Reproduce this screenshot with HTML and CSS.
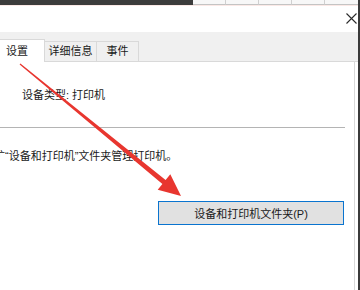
FILE: index.html
```html
<!DOCTYPE html>
<html lang="zh-CN">
<head>
    <meta charset="UTF-8">
    <meta name="viewport" content="width=device-width, initial-scale=1.0">
    <title>打印机属性</title>
    <link rel="stylesheet" href="styles.css">
</head>
<body>
    <div class="window">
        <div class="topbar">
            <div class="topbar-dark"></div>
            <div class="topbar-cell"></div>
            <div class="topbar-cell"></div>
            <div class="topbar-cell"></div>
            <div class="topbar-cell"></div>
            <div class="topbar-cell"></div>
        </div>

        <div class="titlebar">
            <svg class="close" width="11" height="11" viewBox="0 0 11 11">
                <path d="M0.5 0.5 L10.5 10.5 M10.5 0.5 L0.5 10.5" stroke="#2b2b2b" stroke-width="1.1" fill="none"/>
            </svg>
        </div>

        <div class="tabstrip">
            <div class="tab active">设置</div>
            <div class="tab">详细信息</div>
            <div class="tab">事件</div>
        </div>

        <div class="panel">
            <p class="device-type">设备类型: 打印机</p>
            <hr class="separator">
            <p class="hint">扩“设备和打印机”文件夹管理打印机。</p>
            <div class="actions">
                <button class="folder-btn">设备和打印机文件夹(P)</button>
            </div>
        </div>
    </div>

    <!-- annotation arrow drawn over the dialog -->
    <svg class="arrow" width="360" height="290" viewBox="0 0 360 290">
        <polygon points="20.4,63.5 165.6,180.1 170.3,174.3 181,196 157.7,189.7 162.4,183.9 19.6,64.5" fill="#e8362f"/>
    </svg>
</body>
</html>
```

FILE: styles.css
```css
body {
    margin: 0;
    width: 360px;
    height: 290px;
    overflow: hidden;
    background-color: #fff;
    font-family: "Liberation Sans", "Noto Sans CJK SC", sans-serif;
    font-size: 11px;
    color: #1a1a1a;
    position: relative;
}

.window {
    display: flex;
    flex-direction: column;
    height: 290px;
    border-right: 2px solid #3a3a3a;
}

.topbar {
    display: flex;
    height: 5px;
    flex-shrink: 0;
}

.topbar-dark {
    width: 193px;
    background-color: #3c3c3c;
}

.topbar-cell {
    width: 32px;
    background-color: #f7f7f7;
    border-right: 1px solid #d0d0d0;
    border-bottom: 1px solid #c4c4c4;
}

.topbar-cell:last-child {
    flex: 1;
    border-right: none;
}

.titlebar {
    height: 27px;
    flex-shrink: 0;
    display: flex;
    justify-content: flex-end;
    align-items: flex-start;
    padding-right: 1px;
    border-top: 1px solid #fbe9e6;
    box-sizing: border-box;
}

.close {
    margin-top: 7px;
}

.tabstrip {
    height: 30px;
    flex-shrink: 0;
    display: flex;
    align-items: flex-end;
    background-color: #f0f0f0;
    border-bottom: 1px solid #d9d9d9;
    box-sizing: border-box;
}

.tab {
    height: 20px;
    line-height: 19px;
    box-sizing: border-box;
    border: 1px solid #d9d9d9;
    border-bottom: none;
    border-left: none;
    background-color: #f0f0f0;
    text-align: center;
}

.tab:nth-child(2) {
    width: 52px;
}

.tab:nth-child(3) {
    width: 42px;
}

.tab.active {
    width: 45px;
    height: 23px;
    line-height: 22px;
    margin-bottom: -1px;
    background-color: #fff;
    text-align: left;
    padding-left: 6px;
}

.panel {
    flex: 1;
    margin-right: 3px;
    border-right: 1px solid #d9d9d9;
    background-color: #fff;
}

.device-type {
    margin: 25px 0 0 22px;
    line-height: 16px;
}

.separator {
    margin: 24px 9px 0 0;
    border: none;
    border-top: 1px solid #b4b4b4;
}

.hint {
    margin: 20px 0 0 -6px;
    line-height: 16px;
    white-space: nowrap;
}

.actions {
    display: flex;
    justify-content: flex-end;
    padding: 37px 10px 0 0;
}

.folder-btn {
    width: 186px;
    height: 24px;
    padding: 0;
    background-color: #e1e1e1;
    border: 1px solid #0a74cf;
    border-radius: 0;
    font-family: inherit;
    font-size: 11px;
    color: #1a1a1a;
}

.arrow {
    position: absolute;
    left: 0;
    top: 0;
    pointer-events: none;
}
```
